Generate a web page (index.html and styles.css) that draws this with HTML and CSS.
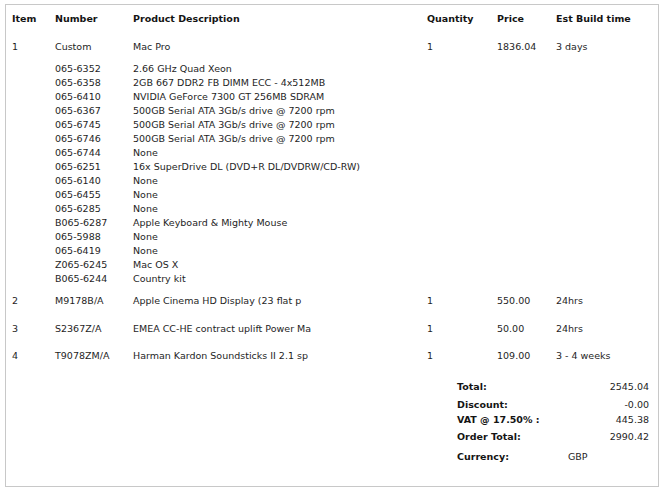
FILE: index.html
```html
<!DOCTYPE html>
<html>
<head>
<meta charset="utf-8">
<link rel="stylesheet" href="styles.css">
</head>
<body>
<div class="order">
  <div class="row head">
    <div>Item</div><div>Number</div><div>Product Description</div><div>Quantity</div><div>Price</div><div>Est Build time</div>
  </div>
  <div class="row item first">
    <div>1</div><div>Custom</div><div>Mac Pro</div><div>1</div><div>1836.04</div><div>3 days</div>
  </div>
  <div class="parts">
    <div class="row"><div></div><div>065-6352</div><div>2.66 GHz Quad Xeon</div></div>
    <div class="row"><div></div><div>065-6358</div><div>2GB 667 DDR2 FB DIMM ECC - 4x512MB</div></div>
    <div class="row"><div></div><div>065-6410</div><div>NVIDIA GeForce 7300 GT 256MB SDRAM</div></div>
    <div class="row"><div></div><div>065-6367</div><div>500GB Serial ATA 3Gb/s drive @ 7200 rpm</div></div>
    <div class="row"><div></div><div>065-6745</div><div>500GB Serial ATA 3Gb/s drive @ 7200 rpm</div></div>
    <div class="row"><div></div><div>065-6746</div><div>500GB Serial ATA 3Gb/s drive @ 7200 rpm</div></div>
    <div class="row"><div></div><div>065-6744</div><div>None</div></div>
    <div class="row"><div></div><div>065-6251</div><div>16x SuperDrive DL (DVD+R DL/DVDRW/CD-RW)</div></div>
    <div class="row"><div></div><div>065-6140</div><div>None</div></div>
    <div class="row"><div></div><div>065-6455</div><div>None</div></div>
    <div class="row"><div></div><div>065-6285</div><div>None</div></div>
    <div class="row"><div></div><div>B065-6287</div><div>Apple Keyboard &amp; Mighty Mouse</div></div>
    <div class="row"><div></div><div>065-5988</div><div>None</div></div>
    <div class="row"><div></div><div>065-6419</div><div>None</div></div>
    <div class="row"><div></div><div>Z065-6245</div><div>Mac OS X</div></div>
    <div class="row"><div></div><div>B065-6244</div><div>Country kit</div></div>
  </div>
  <div class="row item second">
    <div>2</div><div>M9178B/A</div><div>Apple Cinema HD Display (23 flat p</div><div>1</div><div>550.00</div><div>24hrs</div>
  </div>
  <div class="row item third">
    <div>3</div><div>S2367Z/A</div><div>EMEA CC-HE contract uplift Power Ma</div><div>1</div><div>50.00</div><div>24hrs</div>
  </div>
  <div class="row item fourth">
    <div>4</div><div>T9078ZM/A</div><div>Harman Kardon Soundsticks II 2.1 sp</div><div>1</div><div>109.00</div><div>3 - 4 weeks</div>
  </div>
  <div class="totals">
    <div class="trow t-total"><span class="lbl">Total:</span><span class="val">2545.04</span></div>
    <div class="trow t-disc"><span class="lbl">Discount:</span><span class="val">-0.00</span></div>
    <div class="trow t-vat"><span class="lbl">VAT @ 17.50% :</span><span class="val">445.38</span></div>
    <div class="trow t-order"><span class="lbl">Order Total:</span><span class="val">2990.42</span></div>
    <div class="trow t-cur"><span class="lbl">Currency:</span><span class="cur">GBP</span></div>
  </div>
</div>
</body>
</html>
```
FILE: styles.css
```css
html, body { margin: 0; padding: 0; background: #fff; }
body {
  font-family: "DejaVu Sans", Verdana, sans-serif;
  font-size: 9.5px;
  color: #1e1e1e;
}
.order {
  margin: 4px 0 0 5px;
  width: 652px;
  height: 474px;
  border: 1px solid #c8c8c8;
  padding-top: 7px;
  box-sizing: content-box;
}
.row {
  display: grid;
  grid-template-columns: 43px 78px 294px 70px 59px 1fr;
  padding-left: 6px;
  line-height: 14px;
  height: 14px;
  white-space: nowrap;
}
.head { font-weight: bold; color: #141414; }
.item.first { margin-top: 14px; }
.parts { margin-top: 8px; }
.item.second { margin-top: 8px; }
.item.third { margin-top: 14px; }
.item.fourth { margin-top: 13px; }
.totals {
  margin: 17px 0 0 451px;
  width: 192px;
}
.trow {
  display: flex;
  justify-content: space-between;
  line-height: 14px;
  height: 14px;
}
.lbl { font-weight: bold; color: #141414; }
.t-disc { margin-top: 4px; }
.t-vat { margin-top: 1px; }
.t-order { margin-top: 3px; }
.t-cur { margin-top: 6px; justify-content: flex-start; }
.t-cur .cur { margin-left: 59px; }
```
